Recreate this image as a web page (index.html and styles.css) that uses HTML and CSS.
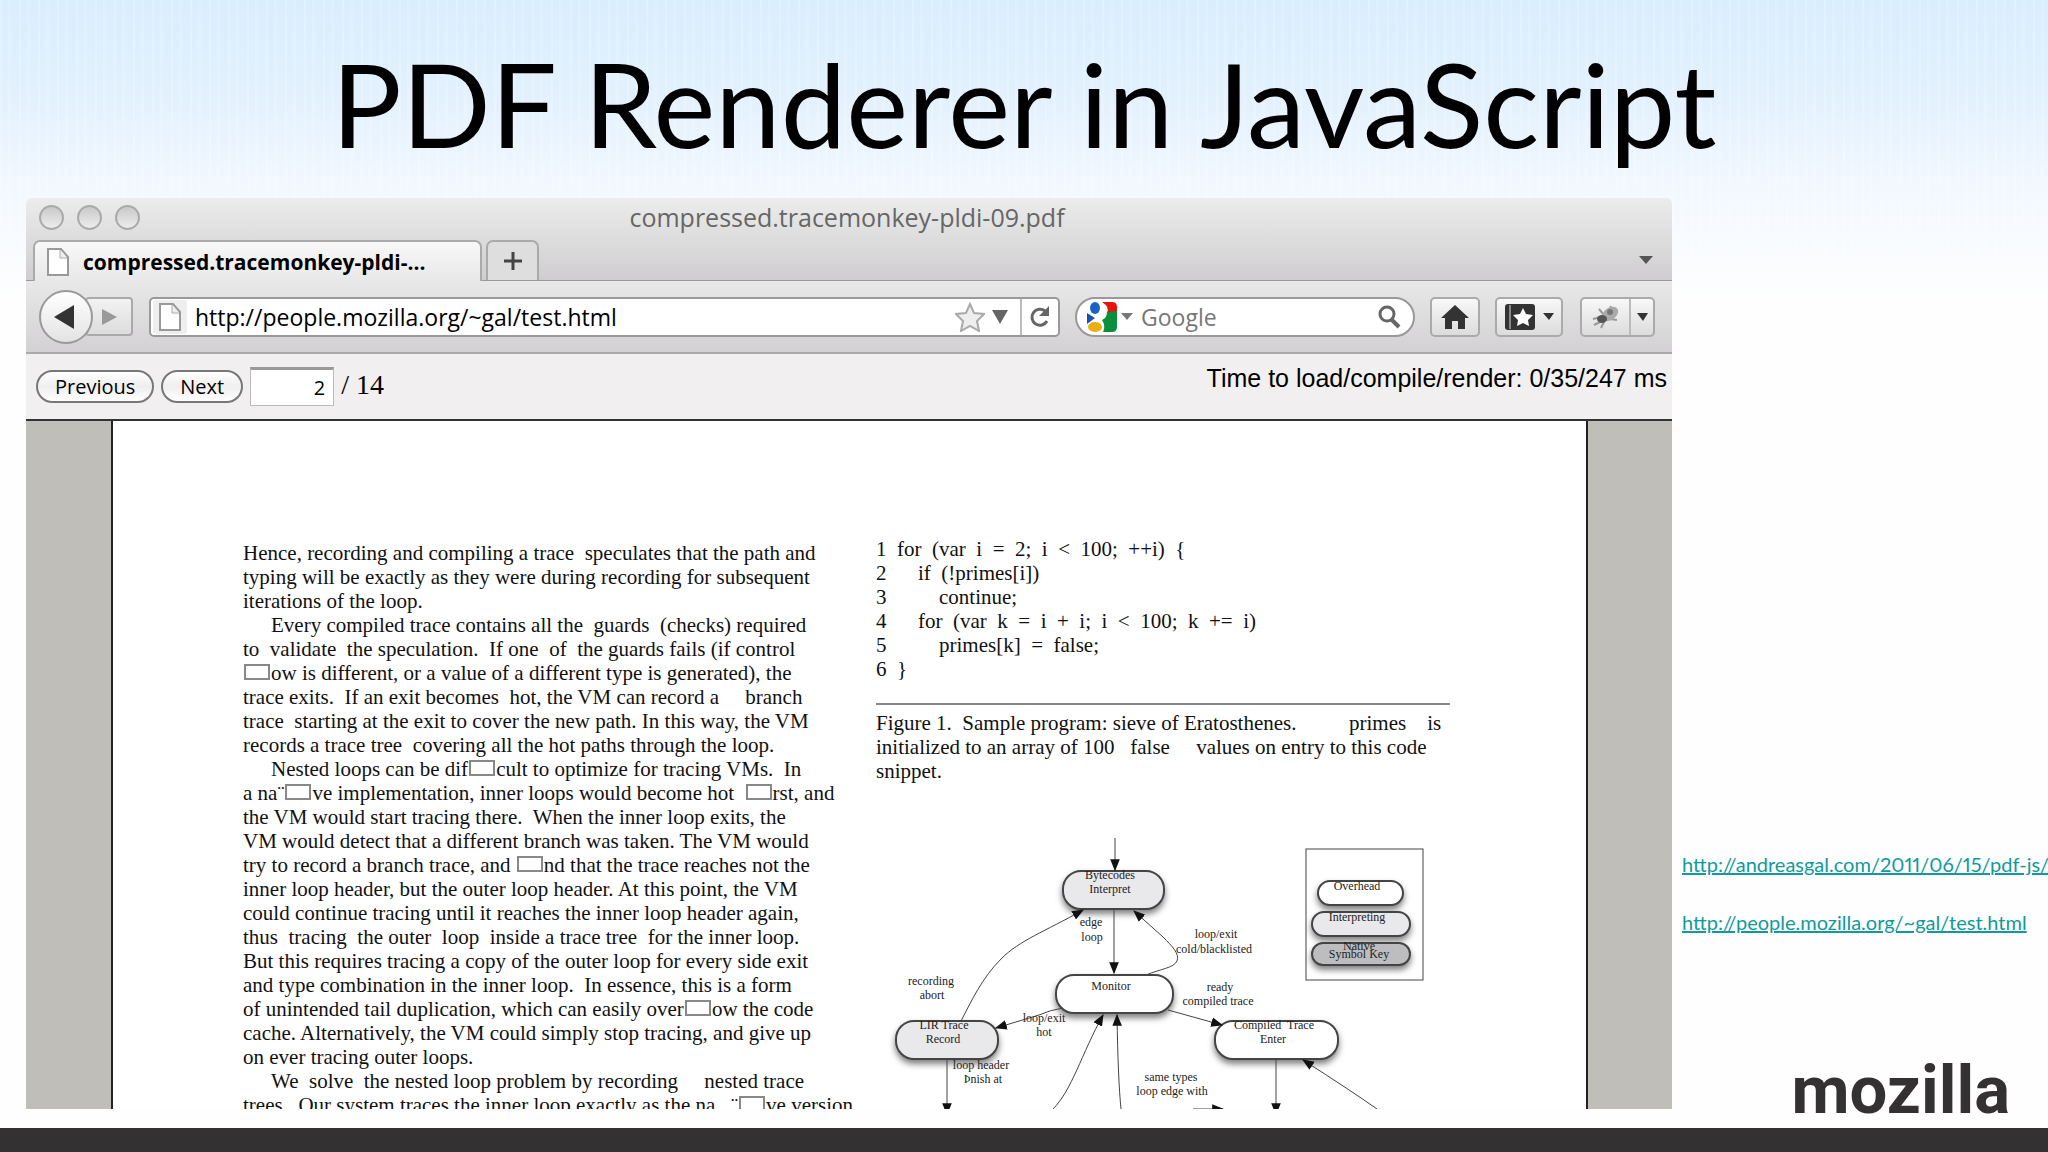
FILE: index.html
```
<!DOCTYPE html>
<html lang="en">
<head>
  <meta charset="UTF-8" />
  <meta name="viewport" content="width=device-width, initial-scale=1" />
  <title>PDF Renderer in JavaScript</title>
  <link rel="stylesheet" href="styles.css">
</head>
<body>
  <header class="slide-title"><h1>PDF Renderer in JavaScript</h1></header>
  <main>
    <section class="browser">
      <div class="titlebar">
        <div class="lights"><span></span><span></span><span></span></div>
        <div class="window-title">compressed.tracemonkey-pldi-09.pdf</div>
      </div>
      <div class="tabs">
        <button class="tab">
          <svg class="doc-icon" viewBox="0 0 22 28" width="22" height="28"><path d="M1 1h13l7 8v18H1z" fill="#fff" stroke="#999" stroke-width="2"/><path d="M13 2v8h7" fill="#eee" stroke="#aaa"/></svg>
          compressed.tracemonkey-pldi-...
        </button>
        <button class="new-tab" aria-label="New tab"><svg viewBox="0 0 18 18" width="18" height="18"><path d="M9 0v18M0 9h18" stroke="#444" stroke-width="3"/></svg></button>
        <button class="all-tabs" aria-label="List all tabs"><svg viewBox="0 0 14 8" width="14" height="8"><path d="M0 0h14L7 8z" fill="#555"/></svg></button>
      </div>
      <div class="navbar">
        <div class="history">
          <button class="back" aria-label="Back"><svg viewBox="0 0 20 24" width="20" height="24"><path d="M20 0v24L0 12z" fill="#333"/></svg></button>
          <button class="forward" aria-label="Forward"><svg viewBox="0 0 15 16" width="15" height="16"><path d="M0 0v16l15-8z" fill="#999"/></svg></button>
        </div>
        <div class="urlbar">
          <span class="site"><svg class="doc-icon" viewBox="0 0 22 28" width="22" height="28"><path d="M1 1h13l7 8v18H1z" fill="#fff" stroke="#999" stroke-width="2"/><path d="M13 2v8h7" fill="#eee" stroke="#aaa"/></svg></span>
          <input type="text" class="url" aria-label="Address" value="http://people.mozilla.org/~gal/test.html" />
          <button aria-label="Bookmark"><svg viewBox="0 0 30 30" width="30" height="30"><path d="M15 2l4 9 10 1-7 7 2 10-9-5-9 5 2-10-7-7 10-1z" fill="#eee" stroke="#aaa" stroke-width="2"/></svg></button>
          <button class="drop" aria-label="History"><svg viewBox="0 0 16 14" width="16" height="14"><path d="M0 0h16L8 14z" fill="#666"/></svg></button>
          <button class="reload" aria-label="Reload"><svg viewBox="0 0 22 22" width="22" height="22"><path d="M16 5A8 8 0 1 0 18 15" fill="none" stroke="#666" stroke-width="3"/><path d="M20 0v10H10z" fill="#666"/></svg></button>
        </div>
        <div class="search">
          <svg viewBox="0 0 30 30" width="30" height="30"><path d="M0 11l8 5-8 6z" fill="#1553b5"/><path d="M15 0h10q5 0 5 5v6H20q3-6-5-11z" fill="#e8120c"/><path d="M20 10l10-1v16q0 5-5 5h-9q3-6-1-12 5-2 5-8z" fill="#0b8f3d"/><ellipse cx="8" cy="6" rx="5" ry="6" fill="#1a62c7"/><ellipse cx="8" cy="25" rx="7" ry="5" fill="#efad15"/></svg>
          <svg viewBox="0 0 12 7" width="12" height="7"><path d="M0 0h12L6 7z" fill="#777"/></svg>
          <input type="text" aria-label="Search" placeholder="Google" />
          <button aria-label="Search"><svg viewBox="0 0 24 24" width="24" height="24"><circle cx="10" cy="9" r="7" fill="none" stroke="#666" stroke-width="3"/><path d="M14 14l8 8" stroke="#666" stroke-width="4"/></svg></button>
        </div>
        <button class="tool home" aria-label="Home"><svg viewBox="0 0 28 24" width="28" height="24"><path d="M14 0l14 13h-4v11h-7v-8h-6v8H4V13H0z" fill="#333"/></svg></button>
        <button class="tool bookmarks" aria-label="Bookmarks">
          <svg viewBox="0 0 30 26" width="30" height="26"><rect width="30" height="26" rx="3" fill="#333"/><path d="M5 1v24" stroke="#888" stroke-width="2"/><path d="M18 4l3 6 7 1-5 5 1 6-6-3-6 3 1-6-5-5 7-1z" fill="#fff"/></svg>
          <svg viewBox="0 0 11 7" width="11" height="7"><path d="M0 0h11L6 7z" fill="#333"/></svg>
        </button>
        <div class="firebug">
          <button aria-label="Firebug"><svg viewBox="0 0 30 24" width="30" height="24"><path d="M2 14l8-2M3 20l8-4M10 23l3-6M8 4l5 6M20 1l-2 6M26 15l-7-1" stroke="#999" stroke-width="2"/><ellipse cx="19" cy="9" rx="9" ry="6" transform="rotate(-35 19 9)" fill="#aaa"/><circle cx="19" cy="7" r="3" fill="#777"/><ellipse cx="11" cy="14" rx="5" ry="4" fill="#555"/></svg></button>
          <button class="more" aria-label="Firebug menu"><svg viewBox="0 0 11 8" width="11" height="8"><path d="M0 0h11L6 8z" fill="#333"/></svg></button>
        </div>
      </div>
      <div class="controls">
        <button>Previous</button>
        <button>Next</button>
        <input type="text" id="page-number" value="2" />
        <label for="page-number">/ 14</label>
        <span class="info">Time to load/compile/render: 0/35/247 ms</span>
      </div>
      <div class="viewer">
        <article class="page">
          <div class="column">
<p>Hence, recording and compiling a trace  speculates that the path and
typing will be exactly as they were during recording for subsequent
iterations of the loop.</p>
<p class="indent">Every compiled trace contains all the  guards  (checks) required
to  validate  the speculation.  If one  of  the guards fails (if control
<i class="glyph"></i>ow is different, or a value of a different type is generated), the
trace exits.  If an exit becomes  hot, the VM can record a     branch
trace  starting at the exit to cover the new path. In this way, the VM
records a trace tree  covering all the hot paths through the loop.</p>
<p class="indent">Nested loops can be dif<i class="glyph"></i>cult to optimize for tracing VMs.  In
a na¨<i class="glyph"></i>ve implementation, inner loops would become hot  <i class="glyph"></i>rst, and
the VM would start tracing there.  When the inner loop exits, the
VM would detect that a different branch was taken. The VM would
try to record a branch trace, and <i class="glyph"></i>nd that the trace reaches not the
inner loop header, but the outer loop header. At this point, the VM
could continue tracing until it reaches the inner loop header again,
thus  tracing  the outer  loop  inside a trace tree  for the inner loop.
But this requires tracing a copy of the outer loop for every side exit
and type combination in the inner loop.  In essence, this is a form
of unintended tail duplication, which can easily over<i class="glyph"></i>ow the code
cache. Alternatively, the VM could simply stop tracing, and give up
on ever tracing outer loops.</p>
<p class="indent">We  solve  the nested loop problem by recording     nested trace
trees.  Our system traces the inner loop exactly as the na   ¨<i class="glyph"></i>ve version</p>
          </div>
          <div class="column">
<pre>1  for  (var  i  =  2;  i  &lt;  100;  ++i)  {
2      if  (!primes[i])
3          continue;
4      for  (var  k  =  i  +  i;  i  &lt;  100;  k  +=  i)
5          primes[k]  =  false;
6  }</pre>
<p class="caption">Figure 1.  Sample program: sieve of Eratosthenes.          primes    is
initialized to an array of 100   false     values on entry to this code
snippet.</p>
            <svg class="diagram" viewBox="16 15 576 274" width="576" height="274">
              <defs>
                <marker id="arrow" viewBox="0 0 10 8" refX="9" refY="4" markerWidth="12" markerHeight="10" markerUnits="userSpaceOnUse" orient="auto"><path d="M0 0l10 4-10 4z" fill="#111"/></marker>
              </defs>
              <rect x="446" y="29" width="117" height="131" fill="#fff" stroke="#444"/>
              <g class="node">
                <rect class="gray" x="203" y="51" width="101" height="38" rx="18"/>
                <rect x="196" y="155" width="117" height="38" rx="18"/>
                <rect class="gray" x="36" y="201" width="102" height="38" rx="18"/>
                <rect x="355" y="201" width="123" height="38" rx="18"/>
                <rect x="458" y="61" width="85" height="24" rx="12"/>
                <rect class="gray" x="452" y="92" width="98" height="24" rx="12"/>
                <rect class="dark" x="452" y="123" width="98" height="22" rx="11"/>
              </g>
              <g class="edge">
                <path d="M255 18V50"/>
                <path d="M254 89V153"/>
                <path d="M101 201C112 180 122 158 141 139S184 112 223 90"/>
                <path class="tail" d="M286 155C300 149 314 148 317 141S312 126 303 117"/>
                <path d="M303 117L274 91"/>
                <path d="M203 188Q190 190 179 195L136 208"/>
                <path d="M308 190L362 205"/>
                <path d="M193 289C212 270 221 235 243 195"/>
                <path d="M261 289Q258 260 257 195"/>
                <path d="M517 289Q490 270 443 240"/>
                <path d="M87 239V294"/>
                <path d="M416 239V294"/>
                <path d="M333 289H363"/>
              </g>
              <g class="text">
                <text x="250" y="59">Bytecodes</text>
                <text x="250" y="73">Interpret</text>
                <text x="231" y="106">edge</text>
                <text x="232" y="121">loop</text>
                <text x="356" y="118">loop/exit</text>
                <text x="354" y="133">cold/blacklisted</text>
                <text x="71" y="165">recording</text>
                <text x="72" y="179">abort</text>
                <text x="251" y="170">Monitor</text>
                <text x="360" y="171">ready</text>
                <text x="358" y="185">compiled trace</text>
                <text x="84" y="209">LIR Trace</text>
                <text x="83" y="223">Record</text>
                <text x="184" y="202">loop/exit</text>
                <text x="184" y="216">hot</text>
                <text x="414" y="209" xml:space="preserve">Compiled  Trace</text>
                <text x="413" y="223">Enter</text>
                <text x="121" y="249">loop header</text>
                <text x="123" y="263">Þnish at</text>
                <text x="311" y="261">same types</text>
                <text x="312" y="275">loop edge with</text>
                <text x="497" y="70">Overhead</text>
                <text x="497" y="101">Interpreting</text>
                <text x="499" y="130">Native</text>
                <text x="499" y="138">Symbol Key</text>
              </g>
            </svg>
          </div>
        </article>
      </div>
    </section>
    <aside class="links">
      <a href="http://andreasgal.com/2011/06/15/pdf-js/">http://andreasgal.com/2011/06/15/pdf-js/</a>
      <a href="http://people.mozilla.org/~gal/test.html">http://people.mozilla.org/~gal/test.html</a>
      <div class="logo">mozilla</div>
    </aside>
  </main>
  <footer></footer>
</body>
</html>
```
FILE: styles.css
```
* { box-sizing: border-box; }
body { margin: 0; height: 100vh; display: flex; flex-direction: column; overflow: hidden; font-family: "Open Sans", sans-serif; color: #000; background: repeating-linear-gradient(90deg, rgba(255,255,255,0.2) 0 2px, transparent 2px 8px, rgba(255,255,255,0.14) 8px 11px, transparent 11px 19px), linear-gradient(#d9eefd 0, #e3f1fd 100px, #f4f9ff 200px, #fefefe 300px); }
button { display: flex; align-items: center; justify-content: center; margin: 0; padding: 0; border: 0; background: none; font-family: inherit; color: inherit; }
input { border: 0; background: none; font-family: inherit; min-width: 0; }
svg { flex: none; display: block; }

.slide-title { height: 198px; display: flex; align-items: center; justify-content: center; padding-top: 8px; }
.slide-title h1 { margin: 0; font-family: Lato, sans-serif; font-size: 117px; font-weight: 400; line-height: 1; white-space: nowrap; }

main { flex: 1; min-height: 0; display: flex; padding-left: 26px; }
.browser { flex: 1; min-width: 0; display: flex; flex-direction: column; margin-bottom: 19px; overflow: hidden; border-radius: 6px 6px 0 0; background: linear-gradient(#ececec, #cfcdcf 83px); }

.titlebar { display: flex; align-items: center; height: 42px; padding: 0 13px 4px; flex: none; }
.lights { display: flex; gap: 13px; width: 120px; }
.lights span { width: 25px; height: 25px; border: 2px solid #aaa; border-radius: 50%; background: linear-gradient(#c9c9c9, #ededed); }
.window-title { flex: 1; text-align: center; padding-right: 124px; font-size: 25px; line-height: 38px; color: #666; }

.tabs { display: flex; align-items: stretch; height: 41px; flex: none; padding-left: 7px; border-bottom: 1px solid #999; }
.tab { width: 449px; height: 41px; justify-content: flex-start; gap: 14px; padding-left: 12px; border: 2px solid #aaa; border-bottom: 0; border-radius: 7px 7px 0 0; background: linear-gradient(#f8f8f8, #e9e8e9); font-size: 21px; font-weight: 700; white-space: nowrap; }
.new-tab { width: 53px; margin-left: 4px; border: 2px solid #aaa; border-bottom: 0; border-radius: 7px 7px 0 0; background: #dedede; }
.all-tabs { margin-left: auto; padding-right: 19px; }

.navbar { display: flex; align-items: center; height: 73px; flex: none; padding: 0 17px 0 13px; background: linear-gradient(#e9e8e9, #d3d1d3); border-bottom: 2px solid #aaa; }
.history { display: flex; align-items: center; margin-right: 16px; }
.back { width: 54px; height: 54px; border: 2px solid #999; border-radius: 50%; background: linear-gradient(#fff, #e3e3e3); padding-right: 4px; z-index: 1; }
.forward { width: 48px; height: 39px; margin-left: -8px; border: 2px solid #aaa; border-radius: 4px; background: linear-gradient(#f2f2f2, #ddd); }
.urlbar { flex: 1; display: flex; align-items: center; height: 40px; border: 2px solid #999; border-radius: 5px; background: #fff; }
.site { display: flex; align-items: center; height: 34px; margin-left: 2px; padding: 0 6px; background: #eee; border-radius: 3px; }
.url { flex: 1; padding: 0 8px; font-size: 23px; }
.drop { padding: 0 12px 0 7px; }
.reload { width: 38px; height: 36px; border-left: 2px solid #bbb; }
.search { display: flex; align-items: center; gap: 4px; width: 340px; height: 40px; margin: 0 15px; padding: 0 12px 0 10px; border: 2px solid #999; border-radius: 20px; background: #fff; }
.search input { flex: 1; padding: 0 4px; font-size: 23px; }
.search input::placeholder { color: #777; opacity: 1; }
.tool, .firebug { height: 40px; border: 2px solid #aaa; border-radius: 5px; background: linear-gradient(#f8f8f8, #dcdcdc); }
.home { width: 50px; }
.bookmarks { width: 68px; margin: 0 17px 0 15px; gap: 8px; }
.firebug { display: flex; width: 75px; }
.firebug button { flex: 1; }
.firebug .more { flex: none; width: 24px; border-left: 2px solid #bbb; }

.controls { display: flex; align-items: center; height: 67px; flex: none; padding: 0 5px 0 10px; background: #f1efef; border-bottom: 2px solid #333; }
.controls button { height: 33px; margin-right: 7px; padding: 0 17px; border: 2px solid #777; border-radius: 17px; background: linear-gradient(#fff, #eee 50%, #fff); font-size: 20px; }
.controls input { width: 84px; height: 39px; padding: 0 8px; border: 1px solid #bbb; border-top: 3px solid #999; background: #fff; font-size: 20px; text-align: right; }
.controls label { margin: 0 0 4px 7px; font-family: "Liberation Serif", serif; font-size: 28px; }
.info { margin: 0 0 16px auto; font-family: "Liberation Sans", sans-serif; font-size: 25px; }

.viewer { flex: 1; min-height: 0; overflow: hidden; padding: 0 84px 0 85px; background: #c0beb9; }
.page { display: grid; grid-template-columns: 605px 1fr; gap: 28px; padding: 116px 136px 0 130px; border: solid #222; border-width: 0 2px; background: #fff; font-family: "Liberation Serif", serif; font-size: 21px; line-height: 24px; color: #111; }
.page p, .page pre { margin: 0; white-space: pre; font-family: inherit; }
.column { min-width: 0; }
.column > p:first-child { padding-top: 4px; }
.indent { text-indent: 28px; }
.glyph { display: inline-block; width: 26px; height: 16px; margin: 0 1px; border: 2px solid #888; }
.page .caption { margin-top: 22px; padding-top: 6px; border-top: 2px solid #888; }
.diagram { margin-top: 52px; }
.node rect { fill: #fff; stroke: #444; stroke-width: 2; filter: drop-shadow(0 4px 3px rgba(0,0,0,0.5)); }
.node .gray { fill: #e9e9eb; }
.node .dark { fill: #bdbdc0; }
.edge path { fill: none; stroke: #444; marker-end: url(#arrow); }
.edge .tail { marker-end: none; }
.text { font-size: 12px; text-anchor: middle; fill: #222; }

.links { display: flex; flex-direction: column; align-items: flex-start; width: 376px; padding: 654px 0 0 10px; font-family: Lato, sans-serif; font-size: 20px; line-height: 24px; white-space: nowrap; font-variant-numeric: proportional-nums; }
.links a { margin-bottom: 34px; color: #109a9b; }
.logo { margin: auto 38px 0 auto; font-family: Roboto, sans-serif; font-size: 67px; font-weight: 700; line-height: 76px; color: #343132; }
footer { height: 24px; flex: none; background: #343132; }
```
